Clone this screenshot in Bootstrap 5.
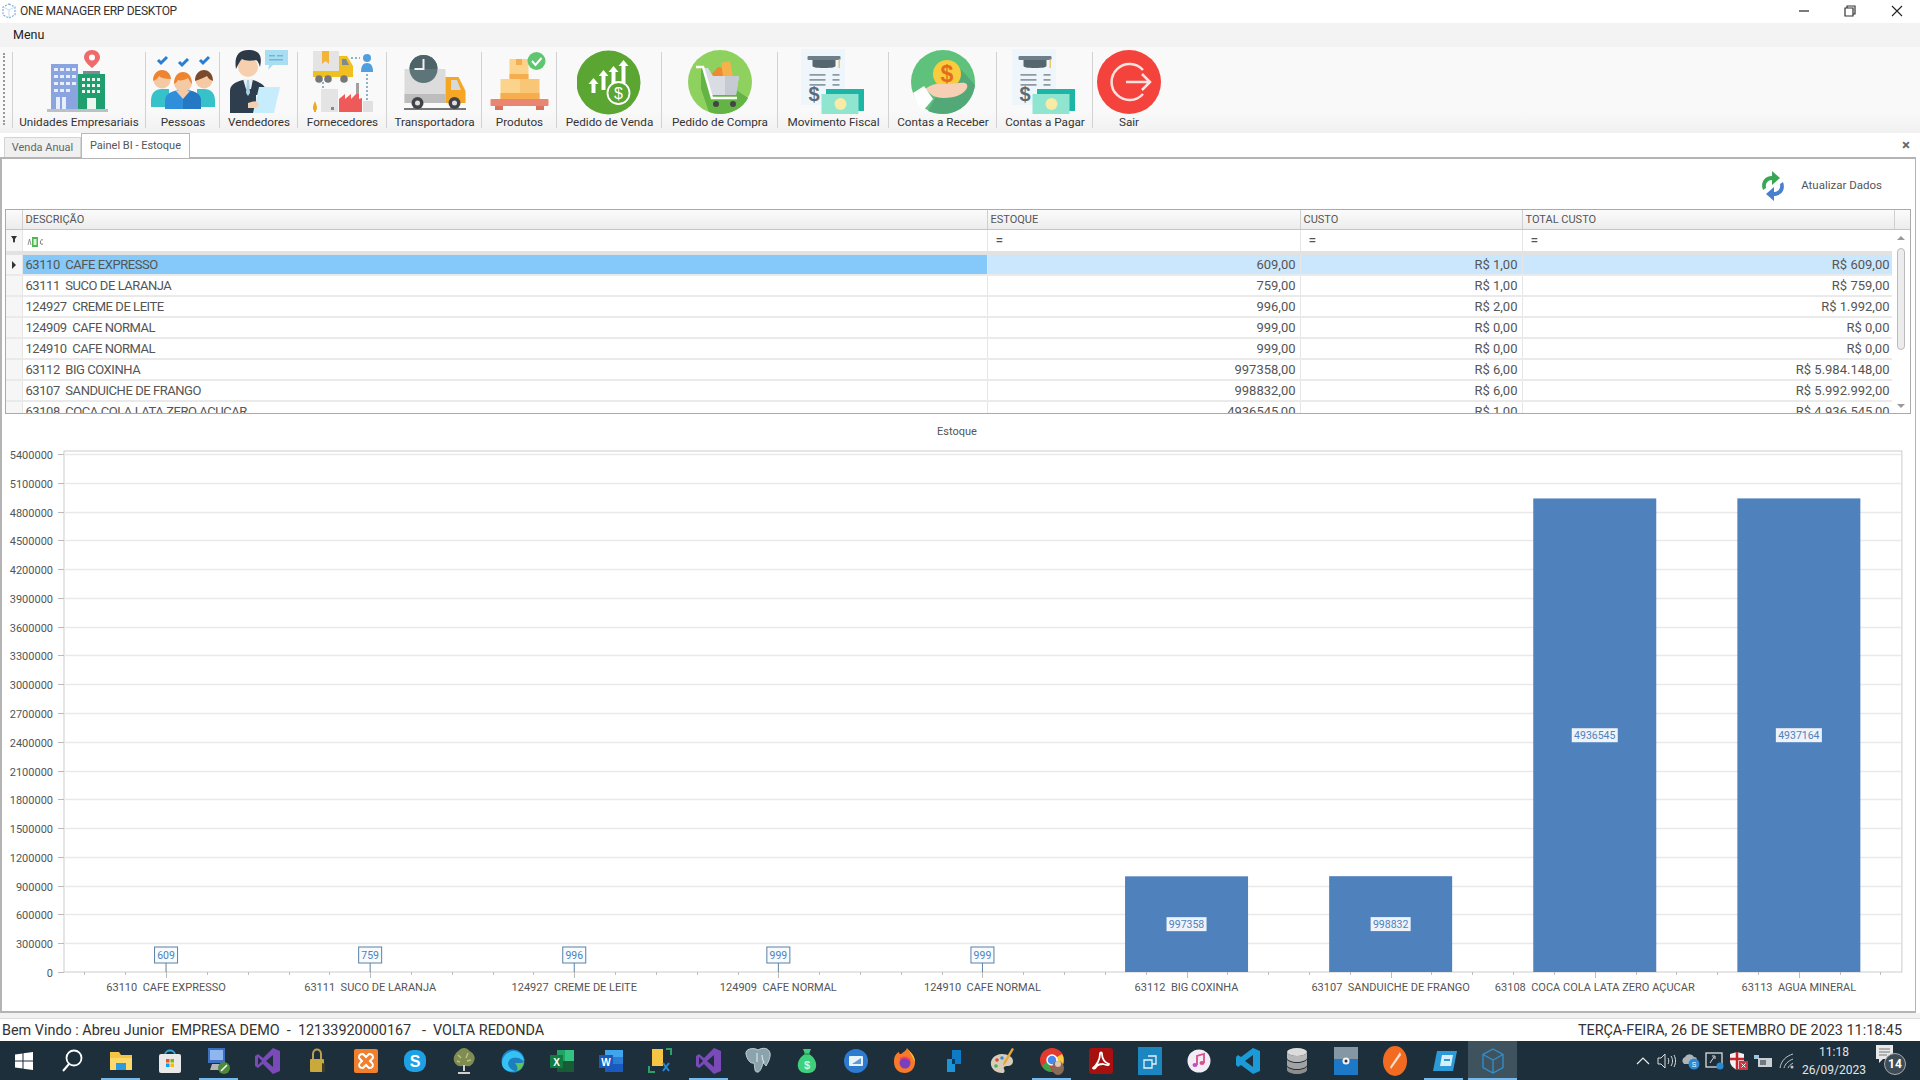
<!DOCTYPE html>
<html lang="pt-BR">
<head>
<meta charset="UTF-8">
<title>ONE MANAGER ERP DESKTOP</title>
<link href="https://cdn.jsdelivr.net/npm/bootstrap@5.3.3/dist/css/bootstrap.min.css" rel="stylesheet">
<style>
  html, body { height: 100%; overflow: hidden; }
  body { font-family: Roboto, "Liberation Sans", sans-serif; color: #444; background: #fff; }
  .app-shell { width: 1920px; height: 1080px; }

  /* barra de titulo */
  .title-strip { height: 23px; font-size: 12px; color: #333; padding-left: 2px; letter-spacing: -.3px; }
  .title-strip .win-btns { gap: 34px; padding-right: 16px; }
  /* menu */
  .menu-strip { height: 24px; background: #f3f3f3; font-size: 12.5px; color: #222; padding-left: 13px; line-height: 24px; }

  /* toolbar */
  .tool-strip { height: 86px; background: linear-gradient(#f9f9f9 75%, #f1f1f1); display: grid;
    grid-template-columns: 12px 134px 74px 78px 89px 95px 75px 105px 116px 111px 108px 96px 72px; }
  .tool-grip { margin: 6px 0 8px 3px; width: 2px; border-left: 2px dotted #999; }
  .tool-cell { display: flex; flex-direction: column; align-items: center; position: relative; font-size: 11.7px; color: #333; white-space: nowrap; }
  .tool-cell svg { display: block; margin-top: 2px; }
  .tool-cell span { line-height: 14px; }
  .tool-cell::after { content: ""; position: absolute; right: 0; top: 5px; bottom: 5px; width: 1px; background: #d2d2d2; }
  .tool-grip + .tool-cell::before { content: ""; position: absolute; left: 0; top: 5px; bottom: 5px; width: 1px; background: #d2d2d2; }
  .tool-cell.no-sep::after { display: none; }

  /* abas */
  .tab-strip { height: 24px; padding-left: 4px; font-size: 11px; color: #666; }
  .tab-off { align-self: flex-end; height: 20px; width: 77px; background: #f0f0f0; border: 1px solid #d4d4d4; border-bottom: 0; text-align: center; line-height: 20px; }
  .tab-on { height: 25px; width: 109px; background: #fff; border: 1px solid #b8b8b8; border-bottom: 0; text-align: center; line-height: 23px; color: #555; margin-bottom: -1px; z-index: 1; }
  .tab-close { margin-left: auto; margin-right: 10px; margin-top: 5px; color: #666; font-size: 15px; line-height: 14px; font-weight: 700; }

  /* painel */
  .panel-body { width: 1916px; height: 857px; border: 1px solid #b4b4b4; border-top-width: 2px; border-left-width: 2px; border-bottom-width: 2px; }
  .refresh-row { height: 50px; gap: 15px; padding-right: 33px; font-size: 11.5px; color: #555; padding-top: 4px; }

  /* grade */
  .data-grid { position: relative; width: 1906px; margin-left: 3px; height: 205px; border: 1px solid #aaa; overflow: hidden; }
  .data-grid .table { width: 1906px; table-layout: fixed; margin: 0; border-collapse: collapse; font-size: 13px; color: #555; --bs-table-bg: transparent; }
  .data-grid .table > * > * > * { padding: 0 4px; height: 21px; line-height: 19px; border: 0; border-bottom: 2px solid #eaeaea; border-right: 1px solid #e6e6e6; white-space: pre; box-shadow: none; color: #555; overflow: hidden; }
  .data-grid .table thead th { font-weight: 400; font-size: 11px; background: linear-gradient(#fbfbfb, #ececec); border-right: 1px solid #d0d0d0; border-bottom: 1px solid #c4c4c4; height: 20px; line-height: 18px; padding-left: 3px; }
  .data-grid .table .filter-row > * { height: 23px; background: #fff; border-bottom: 4px solid #e2e2e2; font-size: 14px; padding-top: 2px; padding-left: 8px; line-height: 16px; }
  .data-grid .table .filter-row > .filter-abc { padding-left: 4px; }
  .data-grid .table td.ind-cell { background: #f6f6f6; padding: 0; text-align: center; }
  .data-grid .table td.desc-cell { letter-spacing: -.45px; padding-left: 3px; }
  .data-grid .table .row-sel td { background: #cbe7fd; }
  .data-grid .table .row-sel td.sel-first { background: #84c9f9; }
  .data-grid .table .row-sel td.ind-cell { background: #f6f6f6; }
  .col-ind { width: 16px; } .col-desc { width: 965px; } .col-est { width: 313px; } .col-cus { width: 222px; } .col-tot { width: 372px; } .col-sb { width: 18px; }
  .grid-scroll { position: absolute; right: 0; top: 20px; bottom: 0; width: 18px; background: #fff; }
  .grid-thumb { position: absolute; left: 5px; width: 8px; top: 18px; height: 102px; border: 1px solid #bbb; background: #ececec; border-radius: 4px; }
  .grid-arrow { position: absolute; left: 5px; width: 0; height: 0; border-left: 4px solid transparent; border-right: 4px solid transparent; }
  .grid-arrow.up { top: 6px; border-bottom: 4px solid #999; }
  .grid-arrow.down { bottom: 5px; border-top: 4px solid #999; }

  /* grafico */
  .chart-box { display: block; }
  .chart-box text { font-family: Roboto, "Liberation Sans", sans-serif; font-size: 11px; fill: #555; }
  .chart-box text.bar-val { font-size: 10.5px; fill: #4f81bd; }

  /* status */
  .gap-band { height: 5px; background: #f2f2f2; }
  .status-strip { height: 24px; border-top: 1px solid #dcdcdc; font-size: 14.4px; color: #333; padding: 2px 18px 0 2px; white-space: pre; line-height: 20px; }

  /* barra do windows */
  .task-strip { height: 39px; background: #1c2f3b; margin-top: -1px; }
  .task-btn { width: 49px; height: 39px; display: flex; align-items: center; justify-content: center; flex: none; position: relative; }
  .task-btn:first-child { width: 47px; }
  .task-btn.open::after { content: ""; position: absolute; left: 5px; right: 5px; bottom: 0; height: 2px; background: #76b9ed; }
  .task-btn.current { background: #3f535f; }
  .task-btn.current::after { left: 0; right: 0; }
  .tray-zone { margin-left: auto; color: #e6e6e6; padding-right: 12px; }
  .tray-clock { font-size: 12px; line-height: 18px; text-align: center; width: 70px; margin-right: 5px; color: #e2e6e8; }
  .tray-icon { width: 24px; display: flex; justify-content: center; }
  .note-box { width: 34px; height: 34px; }
  .note-count { left: 10px; top: 9px; width: 22px; height: 22px; border-radius: 50%; background: #3d4c56; border: 1px solid #aaa; font-size: 12px; color: #fff; font-weight: 700; }
</style>
</head>
<body>
<svg width="0" height="0" class="position-absolute">
  <symbol id="ico-doc" viewBox="0 0 66 66">
    <rect x="0" y="0" width="44" height="56" fill="#eef6fb"/>
    <rect x="6.500" y="7" width="33" height="4" rx="1" fill="#6d7f8a"/>
    <path d="M11.500 11h23v6c0 1-3 2-11.500 2s-11.500-1-11.500-2z" fill="#56666f"/>
    <rect x="37.500" y="10" width="1.400" height="9" fill="#f0c35a"/>
    <path d="M8.500 25h16v1.800h-16zM8.500 30h16v1.800h-16zM8.500 35h16v1.800h-16zM31.500 25h7v1.800h-7zM31.500 30h7v1.800h-7zM31.500 35h7v1.800h-7z" fill="#8d9aa3"/>
    <text x="13" y="52" font-family="Liberation Sans, sans-serif" font-size="20" font-weight="700" fill="#5d6b74" text-anchor="middle">$</text>
    <rect x="25" y="40" width="38" height="22" fill="#1db5a6"/>
    <rect x="20.500" y="45" width="37" height="20" fill="#8fe5cf"/>
    <circle cx="39.500" cy="55" r="6" fill="#f7eba6"/>
  </symbol>
  <symbol id="ico-vs" viewBox="0 0 26 28">
    <path d="M18 1l7 3v20l-7 3L8 17l-5 4-3-2V9l3-2 5 4z" fill="#7a4bb8"/>
    <path d="M18 8v12l-7-6z" fill="#1c2f3b"/>
    <path d="M3 10v8l4-4z" fill="#1c2f3b"/>
  </symbol>
</svg>

<div class="app-shell d-flex flex-column">
  <div class="title-strip d-flex align-items-center">
    <svg width="14" height="16" viewBox="0 0 14 16" class="flex-none"><path d="M7 1l6 3v8l-6 3-6-3V4z" fill="none" stroke="#7fb0dc" stroke-width="1.2" stroke-dasharray="2 1.2"/><path d="M1 4l6 3 6-3M7 7v8" fill="none" stroke="#b8d2ea" stroke-width=".8"/></svg>
    <span class="ms-1">ONE MANAGER ERP DESKTOP</span>
    <div class="win-btns d-flex align-items-center ms-auto">
      <svg width="12" height="12" viewBox="0 0 12 12"><path d="M1 6h10" stroke="#222" stroke-width="1.2"/></svg>
      <svg width="12" height="12" viewBox="0 0 12 12"><path d="M3 3V1h8v8H9M1 3h8v8H1z" fill="none" stroke="#333" stroke-width="1.2"/></svg>
      <svg width="14" height="14" viewBox="0 0 14 14"><path d="M2 2l10 10M12 2L2 12" stroke="#222" stroke-width="1.1"/></svg>
    </div>
  </div>
  <div class="menu-strip">Menu</div>

  <div class="tool-strip">
    <div class="tool-grip"></div>
    <div class="tool-cell">
      <svg width="66" height="66" viewBox="0 0 66 66">
        <rect x="1" y="60" width="61" height="3" fill="#b9c0c8"/>
        <rect x="5" y="15" width="27" height="45" fill="#8aa4e0"/>
        <g fill="#e8eefb"><path d="M8 19h4v3H8zM14 19h4v3h-4zM20 19h4v3h-4zM26 19h4v3h-4zM8 26h4v3H8zM14 26h4v3h-4zM20 26h4v3h-4zM26 26h4v3h-4zM8 33h4v3H8zM14 33h4v3h-4zM20 33h4v3h-4zM26 33h4v3h-4zM8 40h4v3H8zM14 40h4v3h-4zM20 40h4v3h-4z"/><rect x="10" y="48" width="4" height="12"/><rect x="16" y="48" width="4" height="12"/></g>
        <rect x="37" y="22" width="17" height="3" fill="#7d8c94"/>
        <rect x="32" y="25" width="27" height="35" fill="#1f9e6e"/>
        <g fill="#e9f7f0"><path d="M36 29h3v3h-3zM41 29h3v3h-3zM46 29h3v3h-3zM51 29h3v3h-3zM36 35h3v3h-3zM41 35h3v3h-3zM46 35h3v3h-3zM51 35h3v3h-3zM36 41h3v3h-3zM41 41h3v3h-3zM46 41h3v3h-3zM51 41h3v3h-3z"/><rect x="41" y="49" width="9" height="11"/></g>
        <path d="M46 1c-4.500 0-8 3-8 7.500 0 4.500 8 10.500 8 10.500s8-6 8-10.500C54 4 50.500 1 46 1z" fill="#ef6a6a"/><circle cx="46" cy="8.500" r="3" fill="#fff"/>
      </svg>
      <span>Unidades Empresariais</span>
    </div>
    <div class="tool-cell">
      <svg width="66" height="66" viewBox="0 0 66 66">
        <path d="M8 11l3 3 6-6M29 13l3 3 6-6M50 11l3 3 6-6" fill="none" stroke="#2a7fd0" stroke-width="3"/>
        <path d="M1 52c0-8 4-12 11-12h7v18H1z" fill="#36c2c8"/><path d="M47 40h7c7 0 11 4 11 12v6H47z" fill="#36c2c8"/>
        <circle cx="12" cy="31" r="8.500" fill="#f5c9a4"/><path d="M3 32c0-7 4-11 9-11s9 4 9 9c-6 0-10-1-12-3-1 2-3 4-6 5z" fill="#ee8430"/>
        <circle cx="54" cy="31" r="8.500" fill="#f5c9a4"/><path d="M45 32c0-7 4-11 9-11s9 4 9 11c-3-1-5-3-6-5-3 2-7 3-12 5z" fill="#7b4a2c"/>
        <path d="M15 60v-8c0-7 6-11 18-11s18 4 18 11v8z" fill="#2f8fdb"/><path d="M33 41v19h18v-8c0-7-6-11-18-11z" fill="#2478c4"/><path d="M33 41c-2 0-5 .5-7 1l7 8 7-8c-2-.5-5-1-7-1z" fill="#f5c9a4"/>
        <circle cx="33" cy="34" r="9" fill="#f5c9a4"/><path d="M24 35c0-8 4-12 9-12s9 4 9 12c-2-2-3-4-4-6-3 2-8 3-10 2-1 2-2 3-4 4z" fill="#ee8430"/>
      </svg>
      <span>Pessoas</span>
    </div>
    <div class="tool-cell">
      <svg width="66" height="66" viewBox="0 0 66 66">
        <path d="M39 1h23v15H47l-5 5 1-5h-4z" fill="#a9def2"/><path d="M43 6h6v1.500h-6zM51 6h6v1.500h-6zM43 10h14v1.500H43z" fill="#6eb7d6"/>
        <path d="M4 64V42c0-6 5-9 13-11h10c6 2 12 5 13 10l1 5H30v18z" fill="#2e3e4e"/>
        <path d="M17 30h10l-2 10h-5z" fill="#e9f1f6"/><path d="M21 31h2l1 13-2 3-2-3z" fill="#a9cfe6"/>
        <circle cx="22" cy="18" r="10" fill="#f6cfae"/><path d="M10 20C8 8 12 1 22 1s15 4 12 17c-1-3-2-6-4-7-4 1-11 1-14-1-2 2-4 6-6 10z" fill="#2c3a48"/>
        <path d="M27 64l6-26h21l-6 26z" fill="#c7ecfb"/><path d="M22 54c3-1 6-2 9-1l2 3-3 3h-8z" fill="#f6cfae"/>
      </svg>
      <span>Vendedores</span>
    </div>
    <div class="tool-cell">
      <svg width="66" height="66" viewBox="0 0 66 66">
        <rect x="3" y="2" width="26" height="20" fill="#e4e4e4"/><path d="M12 2h7v13l-3.500-3-3.500 3z" fill="#f4b33a"/>
        <rect x="3" y="22" width="40" height="6" fill="#f0c020"/><path d="M29 7h8l6 10v11H29z" fill="#f0c020"/><path d="M32 10h4l3 6h-7z" fill="#7d8a93"/>
        <circle cx="9" cy="30" r="3.800" fill="#777"/><circle cx="18" cy="30" r="3.800" fill="#777"/><circle cx="34" cy="30" r="3.800" fill="#777"/>
        <circle cx="57" cy="9" r="4" fill="#4f9fe0"/><path d="M51 23c0-6 2-9 6-9s6 3 6 9z" fill="#4f9fe0"/>
        <path d="M41 9h9M57 25v27M13 33v7" fill="none" stroke="#6b98b8" stroke-width="1.500" stroke-dasharray="2 2"/>
        <rect x="11" y="40" width="17" height="23" fill="#e4e4e4"/><rect x="21" y="58" width="3" height="3" fill="#888"/>
        <path d="M29 63V50l6-5v5l6-5v5l5-5V34h3v16l3-1v14z" fill="#ee5a5a"/><rect x="46" y="34" width="3" height="11" fill="#a0a0a0"/>
        <rect x="53" y="52" width="10" height="11" fill="#e0e0e0"/><path d="M3 59c0-3 2-7 2-7s2 4 2 7-1 2-1 2v2H4v-2s-1 1-1-2z" fill="#f0a820"/>
      </svg>
      <span>Fornecedores</span>
    </div>
    <div class="tool-cell">
      <svg width="66" height="66" viewBox="0 0 66 66">
        <rect x="2.500" y="20" width="41" height="34" fill="#dcdcdc"/><rect x="2.500" y="45" width="41" height="9" fill="#bdbdbd"/>
        <path d="M43.500 28h13l7 14v12h-20z" fill="#f5a623"/><path d="M49 31h6l4 10H49z" fill="#d9d9d9"/>
        <rect x="2" y="59" width="62" height="2" fill="#777"/>
        <circle cx="21.500" cy="20" r="14" fill="#5d7479"/><path d="M7.500 20a14 14 0 0 1 28 0z" fill="#4e6368"/><path d="M21.500 10v10h-9" fill="none" stroke="#f0f0f0" stroke-width="2"/>
        <circle cx="15.500" cy="54" r="6" fill="#40444a"/><circle cx="15.500" cy="54" r="2.500" fill="#e0e0e0"/>
        <circle cx="52.500" cy="54" r="6" fill="#40444a"/><circle cx="52.500" cy="54" r="2.500" fill="#e0e0e0"/>
      </svg>
      <span>Transportadora</span>
    </div>
    <div class="tool-cell">
      <svg width="66" height="66" viewBox="0 0 66 66">
        <rect x="3.500" y="50" width="58" height="7" rx="1" fill="#e98672"/><rect x="8" y="57" width="8" height="4" fill="#d9735e"/><rect x="49" y="57" width="8" height="4" fill="#d9735e"/>
        <rect x="13.500" y="30" width="19.500" height="20" fill="#fbd38a"/><rect x="33" y="30" width="19.500" height="20" fill="#f8c674"/><rect x="13.500" y="44" width="39" height="6" fill="#f6ad4e"/>
        <rect x="22.500" y="10" width="19" height="20" fill="#fbd38a"/><rect x="22.500" y="25" width="19" height="5" fill="#f6ad4e"/><rect x="29" y="10" width="6" height="6" fill="#f6ad4e"/>
        <circle cx="49.500" cy="12" r="9" fill="#5ec66e"/><path d="M45 12l3.500 4 6-7" fill="none" stroke="#fff" stroke-width="2"/>
      </svg>
      <span>Produtos</span>
    </div>
    <div class="tool-cell">
      <svg width="66" height="66" viewBox="0 0 66 66">
        <circle cx="31.500" cy="33.500" r="32" fill="#5ba532"/>
        <g fill="#fff"><path d="M11.500 35l5-6 5 6h-3v9h-4v-9z"/><path d="M21.500 27l5-6 5 6h-3v14h-4V27z"/><path d="M31.500 23l5-6 5 6h-3v13h-4V23z"/><path d="M41.500 17l5-6 5 6h-3v17h-4V17z"/></g>
        <circle cx="41.500" cy="44" r="11" fill="#5ba532" stroke="#fff" stroke-width="1.800"/>
        <text x="41.500" y="50" font-family="Liberation Sans, sans-serif" font-size="16" fill="#fff" text-anchor="middle">$</text>
      </svg>
      <span>Pedido de Venda</span>
    </div>
    <div class="tool-cell">
      <svg width="66" height="66" viewBox="0 0 66 66">
        <circle cx="33" cy="33" r="32" fill="#8fd15e"/>
        <path d="M14 17l47 32C56 59 45 65 33 65c-4 0-8-1-11-2L14 40z" fill="#64b445"/>
        <path d="M23 27l8-9 9 1 2 8z" fill="#f08a32"/><path d="M34 14l9-2 3 15H36z" fill="#f5b24a"/>
        <path d="M16 19h5l5 8h26l-3 19H25z" fill="#d9dde3"/><path d="M38 27h14l-3 19H38z" fill="#c6cbd3"/>
        <path d="M9 18h7l9 31h25" fill="none" stroke="#fff" stroke-width="2.500"/>
        <circle cx="29" cy="55" r="3" fill="#444"/><circle cx="46" cy="55" r="3" fill="#444"/>
      </svg>
      <span>Pedido de Compra</span>
    </div>
    <div class="tool-cell"><svg width="66" height="66"><use href="#ico-doc"/></svg><span>Movimento Fiscal</span></div>
    <div class="tool-cell">
      <svg width="66" height="66" viewBox="0 0 66 66">
        <circle cx="33" cy="33" r="32" fill="#5fc27c"/>
        <path d="M18 62c4 2 10 3 15 3 16 0 30-13 32-29L47 16 30 40z" fill="#53a877"/>
        <circle cx="37" cy="25" r="14" fill="#f8cc3c"/>
        <text x="37" y="33" font-family="Liberation Sans, sans-serif" font-size="23" font-weight="700" fill="#e56b1f" text-anchor="middle">$</text>
        <path d="M15 40c6-5 12-6 20-5l15-1c7-1 8 2 7 5-3 6-11 10-24 10-7 0-11-3-11-3z" fill="#f7cfb4"/>
        <path d="M3 44l11-7 9 13-10 12C9 57 5 51 3 44z" fill="#fff"/>
      </svg>
      <span>Contas a Receber</span>
    </div>
    <div class="tool-cell"><svg width="66" height="66"><use href="#ico-doc"/></svg><span>Contas a Pagar</span></div>
    <div class="tool-cell no-sep">
      <svg width="66" height="66" viewBox="0 0 66 66">
        <circle cx="33" cy="33" r="32" fill="#f4433c"/>
        <path d="M47 21a18 18 0 1 0 0 24" fill="none" stroke="#fde3e0" stroke-width="2.500"/>
        <path d="M30 33h24M46 25l8 8-8 8" fill="none" stroke="#fde3e0" stroke-width="2.500"/>
      </svg>
      <span>Sair</span>
    </div>
  </div>

  <div class="tab-strip d-flex">
    <div class="tab-off">Venda Anual</div>
    <div class="tab-on">Painel BI - Estoque</div>
    <div class="tab-close">&times;</div>
  </div>

  <div class="panel-body">
    <div class="refresh-row d-flex align-items-center justify-content-end">
      <svg width="26" height="32" viewBox="0 0 26 32">
        <path d="M3 20C0 12 5 6 12 6V1l8 7-8 7v-5c-4 0-7 3-6 8z" fill="#3aa655"/>
        <path d="M23 12c3 8-2 14-9 14v5l-8-7 8-7v5c4 0 7-3 6-8z" fill="#4a7fd0"/>
      </svg>
      <span>Atualizar Dados</span>
    </div>
    <div class="data-grid">
      <table class="table">
        <colgroup><col class="col-ind"><col class="col-desc"><col class="col-est"><col class="col-cus"><col class="col-tot"><col class="col-sb"></colgroup>
        <thead><tr><th></th><th>DESCRIÇÃO</th><th>ESTOQUE</th><th>CUSTO</th><th>TOTAL CUSTO</th><th></th></tr></thead>
        <tbody id="grid-body"></tbody>
      </table>
      <div class="grid-scroll"><div class="grid-arrow up"></div><div class="grid-thumb"></div><div class="grid-arrow down"></div></div>
    </div>
    <svg id="chart" class="chart-box" width="1914" height="596"></svg>
  </div>
  <div class="gap-band"></div>

  <div class="status-strip d-flex justify-content-between">
    <span>Bem Vindo : Abreu Junior  EMPRESA DEMO  -  12133920000167   -  VOLTA REDONDA</span>
    <span>TERÇA-FEIRA, 26 DE SETEMBRO DE 2023 11:18:45</span>
  </div>

  <div class="task-strip d-flex">
    <div class="task-btn"><svg width="18" height="18" viewBox="0 0 18 18"><path d="M0 2.500L7.500 1.500V8.500H0zM8.500 1.300L18 0V8.500H8.500zM0 9.500H7.500V16.500L0 15.500zM8.500 9.500H18V18L8.500 16.700z" fill="#fff"/></svg></div>
    <div class="task-btn"><svg width="22" height="24" viewBox="0 0 22 24"><circle cx="13" cy="9" r="7.500" fill="none" stroke="#fff" stroke-width="1.800"/><path d="M8 15l-6 7" stroke="#fff" stroke-width="2"/></svg></div>
    <div class="task-btn open"><svg width="24" height="22" viewBox="0 0 24 22"><path d="M1 2h9l2 3h11v15H1z" fill="#f7c544"/><path d="M1 8h22v12H1z" fill="#fbd96b"/><path d="M7 13h10v7H7z" fill="#2b9ae0"/></svg></div>
    <div class="task-btn"><svg width="24" height="24" viewBox="0 0 24 24"><path d="M7 6c0-6 10-6 10 0" fill="none" stroke="#35a8e0" stroke-width="1.800"/><rect x="1" y="5" width="22" height="19" rx="2" fill="#e9e9e9"/><rect x="8" y="10" width="3.500" height="3.500" fill="#f25022"/><rect x="12.500" y="10" width="3.500" height="3.500" fill="#7fba00"/><rect x="8" y="14.500" width="3.500" height="3.500" fill="#00a4ef"/><rect x="12.500" y="14.500" width="3.500" height="3.500" fill="#ffb900"/></svg></div>
    <div class="task-btn open"><svg width="24" height="28" viewBox="0 0 24 28"><rect x="1" y="1" width="17" height="15" fill="#3f6fc0"/><rect x="3" y="3" width="13" height="10" fill="#8db7ee"/><path d="M5 17h9l4 6H3z" fill="#b5b5b5"/><circle cx="17" cy="21" r="6" fill="#4f8a3c"/><path d="M14 24l6-6" stroke="#fff" stroke-width="1.500"/></svg></div>
    <div class="task-btn"><svg width="26" height="28"><use href="#ico-vs"/></svg></div>
    <div class="task-btn"><svg width="16" height="26" viewBox="0 0 16 26"><path d="M4 11V6c0-6 8-6 8 0v5" fill="none" stroke="#b9a24f" stroke-width="2"/><rect x="1" y="11" width="14" height="13" rx="1" fill="#c9a93c"/><path d="M13 24h3v-8l-3-1z" fill="#3b3b2a"/></svg></div>
    <div class="task-btn"><svg width="24" height="24" viewBox="0 0 24 24"><rect width="24" height="24" rx="2" fill="#f07f2e"/><path d="M9 5c-4 0-5 3-3 5l2 2-2 2c-2 2-1 5 3 5l3-3 3 3c4 0 5-3 3-5l-2-2 2-2c2-2 1-5-3-5l-3 3z" fill="none" stroke="#fff" stroke-width="2"/></svg></div>
    <div class="task-btn"><svg width="24" height="24" viewBox="0 0 24 24"><rect x="1" y="1" width="22" height="22" rx="9" fill="#1ea0e4"/><text x="12" y="18" font-family="Liberation Sans, sans-serif" font-size="16" font-weight="700" fill="#fff" text-anchor="middle">S</text></svg></div>
    <div class="task-btn"><svg width="24" height="28" viewBox="0 0 24 28"><path d="M12 1c4 0 5 3 7 4 3 2 5 6 3 9-1 4-5 6-7 5H9c-3 1-6-2-7-5-1-4 1-7 3-9 2-1 3-4 7-4z" fill="#7f8c52"/><path d="M6 8l3 3M16 6l-2 5M19 13l-4 1M5 14l3 1" stroke="#b9c280" stroke-width="1.500"/><path d="M11 18h2v6h-2zM6 25h12v2H6z" fill="#cfcfcf"/></svg></div>
    <div class="task-btn"><svg width="24" height="24" viewBox="0 0 24 24"><circle cx="12" cy="12" r="11.500" fill="#1b7fc9"/><path d="M1 13C2 5 10 0 17 3c4 2 6 6 6 10-4-5-12-6-15-1-2 4 1 9 7 10C7 24 0 20 1 13z" fill="#35c1f1"/><path d="M8 12c3-5 11-4 15 1 0 5-4 9-8 9-6-1-9-6-7-10z" fill="#1e7fbe"/><path d="M14 14c4 0 9 0 9-1-1 5-4 9-8 9 3-1 1-6-1-8z" fill="#5ec65a"/></svg></div>
    <div class="task-btn"><svg width="24" height="24" viewBox="0 0 24 24"><rect x="7" y="1" width="17" height="22" fill="#21a366"/><rect x="7" y="12" width="17" height="11" fill="#185c37"/><rect x="15" y="1" width="9" height="11" fill="#33c481"/><rect y="6" width="13" height="13" fill="#107c41"/><text x="6.500" y="16.500" font-family="Liberation Sans, sans-serif" font-size="10" font-weight="700" fill="#fff" text-anchor="middle">X</text></svg></div>
    <div class="task-btn"><svg width="24" height="24" viewBox="0 0 24 24"><rect x="6" y="1" width="18" height="22" fill="#2b7cd3"/><rect x="6" y="1" width="18" height="7" fill="#41a5ee"/><rect x="6" y="15" width="18" height="8" fill="#185abd"/><rect y="6" width="14" height="13" fill="#185abd"/><text x="7" y="16.500" font-family="Liberation Sans, sans-serif" font-size="10" font-weight="700" fill="#fff" text-anchor="middle">W</text></svg></div>
    <div class="task-btn"><svg width="24" height="26" viewBox="0 0 24 26"><path d="M4 1h11v17H4z" fill="#f7c544"/><path d="M1 18v6h6M18 1h5v6" fill="none" stroke="#2e9e6a" stroke-width="2"/><path d="M15 15l6 8M21 15l-6 8" stroke="#2b88d8" stroke-width="2"/></svg></div>
    <div class="task-btn open"><svg width="26" height="28"><use href="#ico-vs"/></svg></div>
    <div class="task-btn"><svg width="26" height="28" viewBox="0 0 26 28"><path d="M13 3c5-3 11-2 12 3 1 5-3 11-4 13-1-1-2-3-3-3-1 4-3 10-6 9-3 0-2-6-3-9-4 1-7-4-8-9C0 2 8 0 13 3z" fill="#8aa3ad" stroke="#c3d2d8" stroke-width="1"/><path d="M12 6v9M17 8c0 3 1 6 2 8" stroke="#d7e2e6" stroke-width="1.200" fill="none"/></svg></div>
    <div class="task-btn"><svg width="20" height="26" viewBox="0 0 20 26"><path d="M6 1h8l-2 5c5 3 8 8 7 13-1 5-5 6-9 6s-8-1-9-6c-1-5 2-10 7-13z" fill="#3fd07c"/><path d="M7 6h6" stroke="#2a9a58" stroke-width="1.500"/><text x="10" y="21" font-family="Liberation Sans, sans-serif" font-size="11" font-weight="700" fill="#d4f6e2" text-anchor="middle">$</text></svg></div>
    <div class="task-btn"><svg width="24" height="24" viewBox="0 0 24 24"><circle cx="12" cy="12" r="12" fill="#2c7bd1"/><rect x="5" y="7" width="14" height="10" rx="1" fill="#e8f2fb"/><path d="M8 15l9-6v6z" fill="#5f99d8"/></svg></div>
    <div class="task-btn"><svg width="24" height="26" viewBox="0 0 24 26"><path d="M2 8c2-3 3-4 4-4 0 2 1 2 2 2 2-2 5-3 6-6 2 3 8 7 8 14 0 7-5 11-10 11S1 22 1 14c0-2 0-4 1-6z" fill="#f7792a"/><path d="M14 0c2 3 8 7 8 14-2-3-3-7-8-14z" fill="#f9c12e"/><circle cx="12" cy="15" r="5.500" fill="#7a3fbf"/><path d="M7 11c3-2 7-2 10 1" stroke="#f43e68" stroke-width="2" fill="none"/></svg></div>
    <div class="task-btn"><svg width="16" height="26" viewBox="0 0 16 26"><rect x="6" y="2" width="9" height="14" fill="#0f7ac6"/><rect x="1" y="11" width="8" height="13" fill="#1c94d8"/><rect x="6" y="11" width="3" height="5" fill="#083a63"/></svg></div>
    <div class="task-btn"><svg width="26" height="28" viewBox="0 0 26 28"><path d="M12 7C5 7 0 12 1 18c1 5 6 8 11 8 3 0 3-2 2-4s1-3 3-3c3 0 6-1 6-5 0-4-5-7-11-7z" fill="#d8cdb8"/><circle cx="7" cy="13" r="1.800" fill="#d84b3a"/><circle cx="12" cy="11" r="1.800" fill="#3b8ad8"/><circle cx="6" cy="19" r="1.800" fill="#47b25a"/><path d="M22 1l2 1-8 14-3 3 .5-4z" fill="#e7a93c"/></svg></div>
    <div class="task-btn open"><svg width="26" height="28" viewBox="0 0 26 28"><circle cx="13" cy="13" r="12" fill="#e23a2e"/><path d="M13 25A12 12 0 0 1 3 19l6-5z" fill="#3da44d"/><path d="M23 7a12 12 0 0 1-8 18l-2-12z" fill="#f7c93e"/><circle cx="13" cy="13" r="5" fill="#4a8af0" stroke="#fff" stroke-width="1.500"/><ellipse cx="19" cy="21" rx="6" ry="7" fill="#8a6b5a"/><circle cx="19" cy="17" r="3" fill="#e2c7b2"/></svg></div>
    <div class="task-btn"><svg width="24" height="26" viewBox="0 0 24 26"><rect width="24" height="26" rx="3" fill="#a80f0f"/><path d="M4 20c4-3 7-9 7-14 0-2 2-2 2 0 0 5 3 9 7 10 0 2-3 1-6 0-3 0-6 1-7 3-1 2-3 2-3 1z" fill="none" stroke="#fff" stroke-width="1.800"/></svg></div>
    <div class="task-btn"><svg width="24" height="28" viewBox="0 0 24 28"><rect width="24" height="28" fill="#1c86c0"/><path d="M10 9h8v8h-4M6 13h8v8H6z" fill="none" stroke="#e6f2f9" stroke-width="1.300"/></svg></div>
    <div class="task-btn"><svg width="24" height="24" viewBox="0 0 24 24"><circle cx="12" cy="12" r="11.500" fill="#f2ecf6"/><path d="M10 16V7l7-2v9" fill="none" stroke="#d94e8c" stroke-width="1.800"/><ellipse cx="8" cy="16" rx="2.500" ry="2" fill="#c24fc2"/><ellipse cx="15" cy="14" rx="2.500" ry="2" fill="#d94e8c"/></svg></div>
    <div class="task-btn"><svg width="24" height="28" viewBox="0 0 24 28"><path d="M17 1l7 3v20l-7 3L5 18l-3 2-2-2v-8l2-2 3 2z" fill="#1c9ad8"/><path d="M17 8L9 14l8 6z" fill="#1c2f3b"/></svg></div>
    <div class="task-btn"><svg width="22" height="28" viewBox="0 0 22 28"><ellipse cx="11" cy="5" rx="10" ry="4" fill="#dcdcdc"/><path d="M1 5v6c0 2 5 4 10 4s10-2 10-4V5c0 2-5 4-10 4S1 7 1 5z" fill="#b8b8b8"/><path d="M1 12v6c0 2 5 4 10 4s10-2 10-4v-6c0 2-5 4-10 4s-10-2-10-4z" fill="#a2a2a2"/><path d="M1 19v4c0 2 5 4 10 4s10-2 10-4v-4c0 2-5 4-10 4s-10-2-10-4z" fill="#8d8d8d"/></svg></div>
    <div class="task-btn"><svg width="24" height="28" viewBox="0 0 24 28"><rect width="24" height="12" fill="#8497a3"/><rect y="12" width="24" height="16" fill="#1d79c8"/><circle cx="12" cy="14" r="3.500" fill="#f2f2f2"/><circle cx="12" cy="14" r="1.500" fill="#333"/></svg></div>
    <div class="task-btn"><svg width="24" height="30" viewBox="0 0 24 30"><ellipse cx="12" cy="15" rx="12" ry="15" fill="#f26b21"/><path d="M17 6L7 21l1 2 10-14z" fill="#fbe0cf"/></svg></div>
    <div class="task-btn open"><svg width="26" height="22" viewBox="0 0 26 22"><path d="M6 1h20l-4 20H2z" fill="#2b9bd8"/><path d="M11 5h11l-2 11H9z" fill="#d6eef9"/><path d="M13 10h6" stroke="#2b9bd8" stroke-width="2"/></svg></div>
    <div class="task-btn current open"><svg width="22" height="26" viewBox="0 0 22 26"><path d="M11 1l10 5.500v13L11 25 1 19.500v-13zM1 6.500L11 12l10-5.500M11 12v13" fill="none" stroke="#2f8fd0" stroke-width="1.300"/></svg></div>

    <div class="tray-zone d-flex align-items-center">
      <div class="tray-icon"><svg width="14" height="10" viewBox="0 0 14 10"><path d="M1 8l6-6 6 6" fill="none" stroke="#ececec" stroke-width="1.200"/></svg></div>
      <div class="tray-icon"><svg width="20" height="16" viewBox="0 0 20 16"><path d="M1 5h3l4-4v14l-4-4H1z" fill="none" stroke="#ddd"/><path d="M11 5c1 2 1 4 0 6M14 3c2 3 2 7 0 10M17 2c2 4 2 8 0 12" fill="none" stroke="#ddd"/></svg></div>
      <div class="tray-icon"><svg width="20" height="18" viewBox="0 0 20 18"><path d="M3 12a4 4 0 0 1 1-7 5 5 0 0 1 9 0 3 3 0 0 1 3 3v4z" fill="#aeb4b8"/><circle cx="13" cy="12" r="5.500" fill="#2a8ad4"/><text x="13" y="15" font-size="7" fill="#fff" text-anchor="middle" font-family="Liberation Sans, sans-serif">S</text></svg></div>
      <div class="tray-icon"><svg width="20" height="18" viewBox="0 0 20 18"><rect x="1" y="1" width="16" height="14" fill="none" stroke="#ddd" stroke-width="1.300"/><path d="M5 11l4-6M7 4h3v3" fill="none" stroke="#ddd"/><circle cx="15" cy="14" r="3.500" fill="#2a8ad4"/></svg></div>
      <div class="tray-icon"><svg width="20" height="20" viewBox="0 0 20 20"><path d="M8 1l7 2v7c0 4-3 7-7 9-4-2-7-5-7-9V3z" fill="#f2f2f2"/><path d="M8 1v18M1 8h14" stroke="#c4262e" stroke-width="2.500"/><rect x="10" y="10" width="9" height="9" fill="#d1343e"/><path d="M12.500 12.500l4 4M16.500 12.500l-4 4" stroke="#fff"/></svg></div>
      <div class="tray-icon"><svg width="20" height="14" viewBox="0 0 20 14"><rect x="1" y="1" width="5" height="4" fill="#9ec5de"/><rect x="5" y="4" width="14" height="9" fill="#c9cfd2"/><rect x="7" y="6" width="6" height="5" fill="#6f7a80"/></svg></div>
      <div class="tray-icon"><svg width="18" height="16" viewBox="0 0 18 16"><path d="M2 15C3 8 8 3 15 1M6 15c1-4 4-7 9-9M10 15c1-2 2-3 5-5" fill="none" stroke="#bfc5c8"/><circle cx="14" cy="14" r="1.500" fill="#bfc5c8"/></svg></div>
      <div class="tray-clock"><div>11:18</div><div>26/09/2023</div></div>
      <div class="note-box position-relative">
        <svg width="26" height="24" viewBox="0 0 26 24"><path d="M2 1h17v14H9l-4 4v-4H2z" fill="#e8e8e8"/><path d="M5 5h11M5 8h11M5 11h8" stroke="#777"/></svg>
        <span class="note-count position-absolute d-flex align-items-center justify-content-center">14</span>
      </div>
    </div>
  </div>
</div>

<script src="https://cdn.jsdelivr.net/npm/bootstrap@5.3.3/dist/js/bootstrap.bundle.min.js"></script>
<script>
  const linhas = [
    ['63110  CAFE EXPRESSO', '609,00', 'R$ 1,00', 'R$ 609,00'],
    ['63111  SUCO DE LARANJA', '759,00', 'R$ 1,00', 'R$ 759,00'],
    ['124927  CREME DE LEITE', '996,00', 'R$ 2,00', 'R$ 1.992,00'],
    ['124909  CAFE NORMAL', '999,00', 'R$ 0,00', 'R$ 0,00'],
    ['124910  CAFE NORMAL', '999,00', 'R$ 0,00', 'R$ 0,00'],
    ['63112  BIG COXINHA', '997358,00', 'R$ 6,00', 'R$ 5.984.148,00'],
    ['63107  SANDUICHE DE FRANGO', '998832,00', 'R$ 6,00', 'R$ 5.992.992,00'],
    ['63108  COCA COLA LATA ZERO AÇUCAR', '4936545,00', 'R$ 1,00', 'R$ 4.936.545,00']
  ];
  let html = '<tr class="filter-row"><td class="ind-cell"><svg width="8" height="9" viewBox="0 0 8 9"><path d="M1 1h6L5 4v2.500L4 8 3 6.500V4z" fill="#333"/></svg></td>' +
    '<td class="filter-abc"><svg width="18" height="10" viewBox="0 0 18 10"><rect x="5" y="0" width="6" height="10" fill="#4fb84f"/><rect x="6.500" y="2" width="3" height="6" fill="#d8f2d8"/><path d="M1 8l1.500-6L4 8" fill="none" stroke="#777" stroke-width=".8"/><path d="M16 3c-3-2-4 6 0 4" fill="none" stroke="#777"/></svg></td>' +
    '<td>=</td><td>=</td><td>=</td><td></td></tr>';
  linhas.forEach((l, i) => {
    const sel = i === 0;
    html += `<tr${sel ? ' class="row-sel"' : ''}><td class="ind-cell">${sel ? '<svg width="6" height="8" viewBox="0 0 6 8"><path d="M1 0l4 4-4 4z" fill="#333"/></svg>' : ''}</td>` +
      `<td class="desc-cell${sel ? ' sel-first' : ''}">${l[0]}</td><td class="text-end">${l[1]}</td><td class="text-end">${l[2]}</td><td class="text-end">${l[3]}</td><td></td></tr>`;
  });
  document.getElementById('grid-body').innerHTML = html;

  // grafico de barras (coordenadas relativas ao svg, que comeca em y=414)
  const dados = [
    ['63110  CAFE EXPRESSO', 609], ['63111  SUCO DE LARANJA', 759], ['124927  CREME DE LEITE', 996],
    ['124909  CAFE NORMAL', 999], ['124910  CAFE NORMAL', 999], ['63112  BIG COXINHA', 997358],
    ['63107  SANDUICHE DE FRANGO', 998832], ['63108  COCA COLA LATA ZERO AÇUCAR', 4936545], ['63113  AGUA MINERAL', 4937164]
  ];
  const OX = 62, OY = 558, PASSO = 204.1, PORPX = 518 / 5400000, TOPO = 37;
  let s = `<text x="${OX + 893}" y="21" text-anchor="middle">Estoque</text>`;
  s += `<rect x="${OX}" y="${TOPO}" width="${PASSO * 9 + 1}" height="${OY - TOPO}" fill="#fff" stroke="#ccc"/>`;
  for (let v = 0; v <= 5400000; v += 300000) {
    const y = Math.round(OY - v * PORPX) + .5;
    if (v > 0) s += `<line x1="${OX}" x2="${OX + PASSO * 9}" y1="${y}" y2="${y}" stroke="#e9e9e9" stroke-width="1.500"/>`;
    s += `<line x1="${OX - 6}" x2="${OX}" y1="${y}" y2="${y}" stroke="#bbb"/>`;
    s += `<text x="${OX - 11}" y="${y + 4}" text-anchor="end">${v}</text>`;
  }
  // marcas do eixo x: a do centro da categoria e mais comprida
  for (let i = 0; i < 45; i++) {
    const x = Math.round(OX + (i + .5) * PASSO / 5) + .5;
    s += `<line x1="${x}" x2="${x}" y1="${OY}" y2="${OY + (i % 5 === 2 ? 6 : 3)}" stroke="#bbb"/>`;
  }
  dados.forEach((d, i) => {
    const cx = OX + PASSO * (i + .5), h = d[1] * PORPX;
    if (d[1] > 10000) {
      s += `<rect x="${cx - 61.5}" y="${OY - h}" width="123" height="${h}" fill="#4f81bd"/>`;
      const w = String(d[1]).length * 6 + 4, cy = OY - h / 2;
      s += `<rect x="${cx - w / 2}" y="${cy - 7}" width="${w}" height="14" fill="#eef3f9"/>`;
      s += `<text class="bar-val" x="${cx}" y="${cy + 4}" text-anchor="middle">${d[1]}</text>`;
    } else {
      s += `<line x1="${cx}" x2="${cx}" y1="${OY - 9}" y2="${OY}" stroke="#5a80a5"/>`;
      s += `<rect x="${cx - 11.500}" y="${OY - 25}" width="23" height="16" fill="#f7fbfe" stroke="#5a80a5"/>`;
      s += `<text class="bar-val" x="${cx}" y="${OY - 13}" text-anchor="middle">${d[1]}</text>`;
    }
    s += `<text x="${cx}" y="${OY + 19}" text-anchor="middle" xml:space="preserve">${d[0]}</text>`;
  });
  document.getElementById('chart').innerHTML = s;
</script>
</body>
</html>
